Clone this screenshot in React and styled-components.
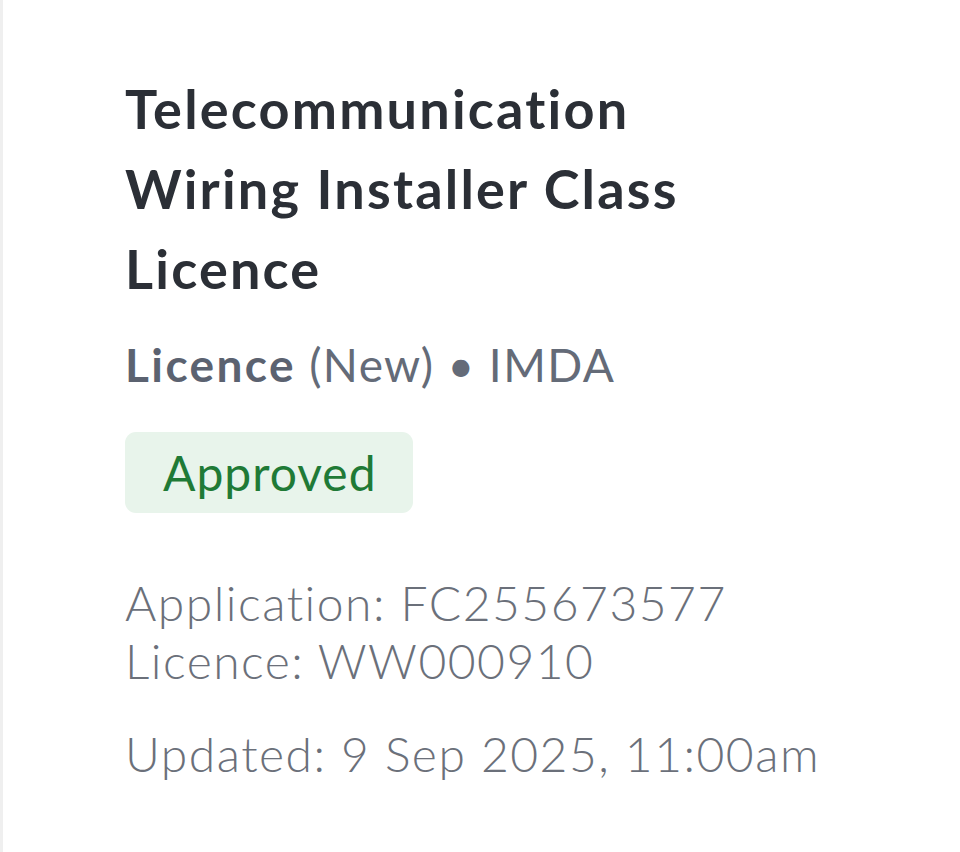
import React from "react";
import styled, { createGlobalStyle } from "styled-components";

const GlobalStyle = createGlobalStyle`
	body {
		margin: 0;
		background: #ffffff;
		font-family: Lato, "Noto Sans", sans-serif;
		font-variant-ligatures: none;
	}
`;

const Card = styled.div`
	min-height: 852px;
	box-sizing: border-box;
	border-left: 3px solid #efefef;
	padding: 69px 40px 0 122px;
	background: #fff;
`;

const Title = styled.h1`
	margin: 0;
	font-size: 54px;
	line-height: 80px;
	font-weight: 700;
	letter-spacing: 2.2px;
	color: #2b2f36;
	max-width: 620px;
`;

const Meta = styled.div`
	margin-top: 30px;
	font-size: 46px;
	line-height: 52px;
	letter-spacing: 1.4px;
	color: #646b78;

	strong {
		font-weight: 700;
		letter-spacing: 2.4px;
		color: #5b6270;
	}
`;

const Badge = styled.span`
	display: inline-flex;
	align-items: center;
	box-sizing: border-box;
	height: 81px;
	margin-top: 41px;
	padding: 0 36px 0 38px;
	border-radius: 11px;
	background: ${(p) => (p.tone === "green" ? "#e8f4eb" : "#eef0f3")};
	color: ${(p) => (p.tone === "green" ? "#1f7a36" : "#4a5160")};
	font-size: 48px;
	letter-spacing: 1px;
`;

const Details = styled.div`
	margin-top: ${(p) => p.gap}px;
	font-size: 48px;
	line-height: 58px;
	font-weight: 300;
	letter-spacing: 1.5px;
	color: #6b707a;
`;

const Line = styled.div``;

export default function App() {
	return (
		<>
			<GlobalStyle />
			<Card>
				<Title>Telecommunication Wiring Installer Class Licence</Title>
				<Meta>
					<strong>Licence</strong> (New) • IMDA
				</Meta>
				<Badge tone="green">Approved</Badge>
				<Details gap={61}>
					<Line>Application: FC255673577</Line>
					<Line>Licence: WW000910</Line>
				</Details>
				<Details gap={35}>
					<Line>Updated: 9 Sep 2025, 11:00am</Line>
				</Details>
			</Card>
		</>
	);
}
